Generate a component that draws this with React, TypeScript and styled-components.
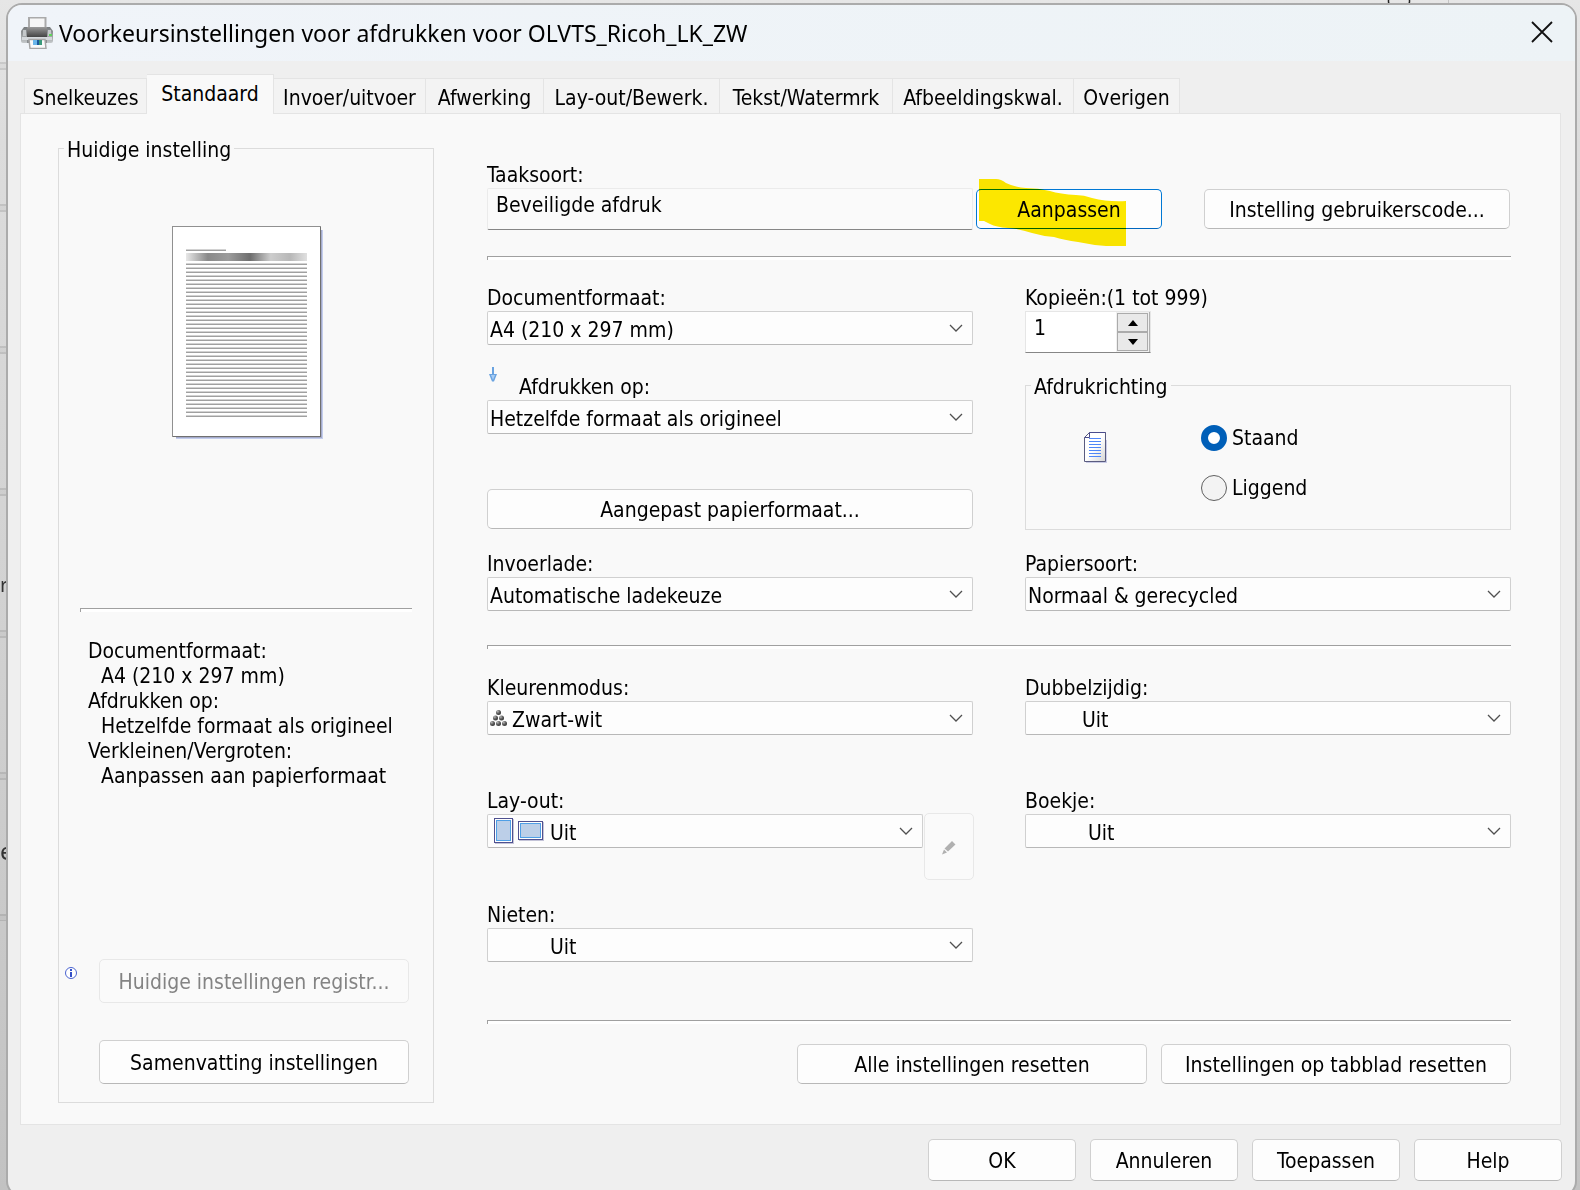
import React, { useState } from "react";
import styled, { createGlobalStyle, css } from "styled-components";

const uiFont = `Tahoma, "DejaVu Sans Condensed", "Noto Sans", sans-serif`;
const titleFont = `"Segoe UI", "Noto Sans", "Open Sans", sans-serif`;

const GlobalStyle = createGlobalStyle`
  *, *::before, *::after { box-sizing: border-box; }
  body { margin: 0; background: #d4d4d4; }
  button, input, select { font: inherit; color: inherit; margin: 0; }
`;

const Desktop = styled.div`
  position: relative;
  display: flex;
  flex-direction: column;
  min-height: 100vh;
  padding: 3px 3px 0 6px;
  overflow: hidden;
  background: linear-gradient(#e6e6e6, #dcdcdc 12%, #d2d2d2 50%, #c2c2c2);
  color: #000;
  font: 21px/26px ${uiFont};
`;

const BehindRows = styled.div`
  position: absolute;
  inset: 62px auto 270px 0;
  width: 8px;
  background: repeating-linear-gradient(
    #0000001c 0 2px, #00000008 2px 6px, #0000001c 6px 8px, transparent 8px 142px
  );
`;

const BehindText = styled.span<{ $top: number; $size: number }>`
  position: absolute;
  top: ${(p) => p.$top}px;
  left: 0;
  font: ${(p) => p.$size}px/26px ${titleFont};
  color: #333;
`;

const BehindBar = styled.svg`
  position: absolute;
  top: 0;
  right: 130px;
`;

const Window = styled.main`
  position: relative;
  flex: 1;
  display: flex;
  flex-direction: column;
  margin-bottom: -6px;
  border: 2px solid #ababab;
  border-radius: 16px;
  overflow: hidden;
  background: #efefef;
`;

const TitleBar = styled.header`
  display: flex;
  align-items: center;
  height: 56px;
  padding: 0 17px 0 13px;
  gap: 6px;
  background: linear-gradient(90deg, #f0f4f9, #edf3f6);
`;

const Title = styled.h1`
  flex: 1;
  margin: 0;
  font: 400 23px/32px ${titleFont};
  white-space: nowrap;
`;

const CloseButton = styled.button`
  display: grid;
  place-items: center;
  width: 32px;
  height: 32px;
  padding: 0 0 2px;
  border: 0;
  background: none;
`;

const Tabs = styled.div`
  display: flex;
  align-items: flex-end;
  height: 52px;
  padding: 0 16px;
`;

const Tab = styled.button<{ $width: number; $active: boolean }>`
  width: ${(p) => p.$width}px;
  height: 35px;
  padding: 3px 0 0;
  border: 1px solid #e4e4e4;
  border-width: 1px 1px 0 0;
  background: #f3f3f3;
  white-space: nowrap;
  line-height: 26px;
  &:first-child { border-left-width: 1px; }
  ${(p) => p.$active && css`
    z-index: 1;
    height: 40px;
    margin-bottom: -1px;
    padding: 0 0 1px;
    background: #f9f9f9;
  `}
`;

const Panel = styled.section`
  flex: 1;
  display: flex;
  gap: 53px;
  margin: 0 14px 0 12px;
  padding: 19px 49px 21px 37px;
  border: 1px solid #e4e4e4;
  background: #f9f9f9;
`;

const Group = styled.fieldset`
  display: flex;
  flex-direction: column;
  min-width: 0;
  margin: 0;
  padding: 0 5px;
  border: 1px solid #dcdcdc;
`;

const Legend = styled.legend`
  padding: 4px 3px 0;
`;

const Overview = styled(Group)`
  flex: 0 0 376px;
`;

const OverviewBody = styled.div`
  flex: 1;
  display: flex;
  flex-direction: column;
  height: 100%;
  padding: 63px 16px 18px;
`;

const Thumbnail = styled.svg`
  align-self: center;
  margin: 0 0 168px 3px;
`;

const Rule = styled.hr`
  width: 100%;
  height: 4px;
  margin: 0;
  border: solid #a0a0a0;
  border-width: 1px 0 0 1px;
  background: #fff;
`;

const Summary = styled.dl`
  margin: 27px 0 auto;
  padding-left: 8px;
  line-height: 25px;
  white-space: nowrap;
`;

const SummaryValue = styled.dd`
  margin: 0 0 0 13px;
`;

const OverviewActions = styled.div`
  display: grid;
  grid-template-columns: 12px 1fr;
  column-gap: 22px;
  row-gap: 37px;
  margin-left: -15px;
  padding-right: 3px;
  & > svg { margin-top: 8px; }
  & > button { grid-column: 2; }
`;

const Button = styled.button<{ $height?: number; $default?: boolean }>`
  display: flex;
  align-items: center;
  justify-content: center;
  height: ${(p) => p.$height ?? 40}px;
  min-width: 0;
  padding: 2px 8px 0;
  border: 1px solid ${(p) => (p.$default ? "#0078d4" : "#d0d0d0")};
  border-bottom-color: ${(p) => (p.$default ? "#0067c0" : "#b8b8b8")};
  border-radius: 5px;
  background: #fdfdfd;
  white-space: nowrap;
  &:disabled {
    border-color: #e8e8e8;
    background: #fafafa;
    color: #838383;
  }
`;

const Settings = styled.div`
  flex: 1;
  min-width: 0;
  padding: 29px 0 19px;
`;

const Columns = styled.div`
  display: grid;
  grid-template-columns: 1fr 1fr;
  column-gap: 52px;
`;

const Stack = styled.div`
  display: flex;
  flex-direction: column;
`;

const Section = styled.div<{ $before: number; $after: number }>`
  padding: ${(p) => p.$before}px 0 ${(p) => p.$after}px;
`;

const Field = styled.div<{ $gap?: number }>`
  display: flex;
  flex-direction: column;
  margin-bottom: ${(p) => p.$gap ?? 0}px;
`;

const Label = styled.label`
  white-space: nowrap;
`;

const LabelRow = styled.div`
  display: flex;
  gap: 22px;
  padding-left: 2px;
  & > svg { margin-top: -7px; }
`;

const JobRow = styled.div`
  display: grid;
  grid-template-columns: 1fr 1fr;
  column-gap: 52px;
  align-items: end;
`;

const JobActions = styled.div`
  display: flex;
  justify-content: space-between;
  margin-left: -49px;
  padding: 0 1px 1px 0;
`;

const JobInput = styled.input`
  width: 100%;
  height: 42px;
  padding: 0 8px 8px;
  border: 1px solid #ebebeb;
  border-bottom-color: #868686;
  border-radius: 2px;
  background: #fafafa;
`;

const Highlighted = styled.div`
  position: relative;
  width: 186px;
  & > button { width: 100%; }
`;

const Marker = styled.svg`
  position: absolute;
  top: -10px;
  left: 3px;
  mix-blend-mode: multiply;
  pointer-events: none;
`;

const CodeButton = styled(Button)`
  width: 306px;
`;

const SelectBox = styled.div`
  position: relative;
  flex: 1;
  display: flex;
`;

const SelectControl = styled.select<{ $indent: number }>`
  appearance: none;
  width: 100%;
  height: 34px;
  padding: 3px 32px 0 ${(p) => p.$indent}px;
  border: 1px solid #d0d0d0;
  border-bottom-color: #b8b8b8;
  border-radius: 2px;
  background: #fdfdfd;
`;

const SelectIcon = styled.span`
  position: absolute;
  inset: 0 auto 0 3px;
  display: flex;
  align-items: center;
  pointer-events: none;
`;

const SheetPair = styled.span`
  display: flex;
  align-items: center;
  gap: 4px;
  padding-left: 4px;
`;

const Chevron = styled.svg`
  position: absolute;
  top: 13px;
  right: 10px;
  pointer-events: none;
`;

const Spinner = styled.div`
  display: flex;
  width: 126px;
  height: 42px;
  border: 1px solid #e6e6e6;
  border-bottom-color: #868686;
  background: #fff;
`;

const SpinnerInput = styled.input`
  appearance: none;
  flex: 1;
  min-width: 0;
  padding: 0 8px 9px;
  border: 0;
  background: none;
  outline: 0;
`;

const SpinnerButtons = styled.div`
  display: flex;
  flex-direction: column;
  width: 34px;
  padding: 1px;
  border-right: 1px solid #b0b0b0;
  background: #f0f0f0;
`;

const SpinButton = styled.button`
  flex: 1;
  display: grid;
  place-items: center;
  padding: 0;
  border: 1px solid #ababab;
  background: #e9e9e9;
`;

const Orientation = styled(Group)`
  height: 160px;
  margin: 17px 0 21px;
`;

const OrientationBody = styled.div`
  display: flex;
  gap: 93px;
  padding: 25px 0 0 53px;
  & > svg { margin-top: 7px; }
`;

const RadioList = styled.div`
  display: flex;
  flex-direction: column;
  gap: 24px;
`;

const RadioLabel = styled.label`
  display: flex;
  align-items: center;
  gap: 5px;
`;

const Radio = styled.input`
  appearance: none;
  width: 26px;
  height: 26px;
  margin: 0;
  border: 1px solid #606060;
  border-radius: 50%;
  background: #f3f3f3;
  &:checked {
    border: 7px solid #005fb8;
    background: #fff;
  }
`;

const LayoutRow = styled.div`
  display: flex;
  gap: 1px;
  height: 34px;
`;

const EditButton = styled(Button)`
  width: 50px;
  margin: -1px -1px 0 0;
`;

const ResetRow = styled.div`
  display: flex;
  justify-content: flex-end;
  gap: 14px;
  padding-top: 20px;
  & > button { width: 350px; }
`;

const Footer = styled.footer`
  display: flex;
  justify-content: flex-end;
  gap: 14px;
  padding: 14px 13px;
  & > button { width: 148px; }
`;

const PrinterIcon = () => (
  <svg width="32" height="32" viewBox="0 0 32 32" aria-hidden="true">
    <defs>
      <linearGradient id="shell" x1="0" x2="0" y1="0" y2="1">
        <stop offset="0" stopColor="#787c7e" />
        <stop offset=".5" stopColor="#9a9ea0" />
        <stop offset="1" stopColor="#c4c8ca" />
      </linearGradient>
      <linearGradient id="slot" x1="0" x2="0" y1="0" y2="1">
        <stop offset="0" stopColor="#9a9a9a" />
        <stop offset="1" stopColor="#444" />
      </linearGradient>
    </defs>
    <path d="M8 .5h16.500V12H8z" fill="#f6f6f6" stroke="#aaa" strokeWidth="2" />
    <path d="M3 10h26l3 4v10q0 2-2 2H2q-2 0-2-2V14z" fill="url(#shell)" />
    <path d="M2 13h3v6H2zM27 13h3v6h-3z" fill="#c4c8ca" />
    <path d="M6 10h20v10H6z" fill="url(#slot)" />
    <path d="M1 20h30v3H1z" fill="#d5d9dc" />
    <rect x="28" y="17" width="3" height="2" fill="#5fd45a" />
    <path d="M6 23h20v3H6z" fill="#8a8e91" />
    <path d="M8 22.500h16l1 9H9z" fill="#fafafa" stroke="#a6a6a6" strokeWidth="1.500" />
    <path d="M12 23h4v5h-4z" fill="#6ab6ea" />
    <path d="M16 23h2v5h-2z" fill="#1c5a9c" />
    <path d="M18 23h3v5h-3z" fill="#3b9a7c" />
  </svg>
);

const ThumbnailDrawing = () => (
  <Thumbnail width="152" height="214" viewBox="0 0 152 214" role="img" aria-label="Voorbeeld" shapeRendering="crispEdges">
    <defs>
      <linearGradient id="band">
        <stop offset="0" stopColor="#e8e8e8" />
        <stop offset=".18" stopColor="#8a8a8a" />
        <stop offset=".35" stopColor="#9c9c9c" />
        <stop offset=".53" stopColor="#6e6e6e" />
        <stop offset=".7" stopColor="#cdcdcd" />
        <stop offset=".86" stopColor="#b8b8b8" />
        <stop offset="1" stopColor="#e0e0e0" />
      </linearGradient>
      <pattern id="lines" width="4" height="4" patternUnits="userSpaceOnUse" y="1">
        <rect width="4" height="1" fill="#d2d2d2" />
        <rect y="1" width="4" height="1" fill="#a0a0a0" />
      </pattern>
    </defs>
    <rect x="4" y="4" width="147" height="209" fill="#c3cdec" />
    <rect x="4" y="4" width="146" height="208" fill="#a5abcb" />
    <rect width="149" height="211" fill="#707070" />
    <rect x="1" y="1" width="147" height="209" fill="#fff" />
    <rect width="149" height="1" fill="#909090" />
    <rect width="1" height="211" fill="#909090" />
    <rect x="14" y="23" width="40" height="1" fill="#d2d2d2" />
    <rect x="14" y="24" width="40" height="1" fill="#a0a0a0" />
    <rect x="14" y="27" width="121" height="8" fill="url(#band)" />
    <rect x="14" y="37" width="121" height="154" fill="url(#lines)" />
  </Thumbnail>
);

const InfoIcon = () => (
  <svg width="12" height="12" viewBox="0 0 12 12" aria-hidden="true">
    <circle cx="6" cy="6" r="5.500" fill="#fff" stroke="#4a63cf" />
    <path d="M5 2h2v2H5zM5 5h2v5H5z" fill="#3450c8" />
  </svg>
);

const ArrowIcon = () => (
  <svg width="8" height="15" viewBox="0 0 8 15" aria-hidden="true">
    <path d="M3 0h2v7h3L5 14.500H3L0 7h3z" fill="#6aa3e0" />
    <path d="M2 8h4l-2 5z" fill="#a9cdf4" />
  </svg>
);

const DocumentIcon = () => (
  <svg width="24" height="31" viewBox="0 0 24 31" aria-hidden="true">
    <defs>
      <linearGradient id="sheet" x1="0" y1="0" x2="1" y2="1">
        <stop offset=".5" stopColor="#fff" />
        <stop offset="1" stopColor="#d4d4d4" />
      </linearGradient>
    </defs>
    <path d="M2 8h21v23H2z" fill="#c9cbe6" />
    <path d="M.5 5.500 5.500.5h16v29H.5z" fill="url(#sheet)" stroke="#5a5c80" />
    <path d="M.5 5.500h5v-5h16" fill="none" stroke="#4a4c8c" />
    <path d="M5 6.500h12M5 9.500h12M5 12.500h12M5 15.500h12M5 18.500h12M5 21.500h12M5 24.500h12" stroke="#4f86f7" />
  </svg>
);

const BallsIcon = () => (
  <svg width="17" height="17" viewBox="0 0 17 17" aria-hidden="true">
    <defs>
      <radialGradient id="ball" cx=".35" cy=".3" r=".8">
        <stop offset="0" stopColor="#b8b8b8" />
        <stop offset=".5" stopColor="#5c5c5c" />
        <stop offset="1" stopColor="#2c2c2c" />
      </radialGradient>
    </defs>
    {[[8.5, 2.5], [5.5, 8], [11.5, 8], [2.5, 13.5], [8.5, 13.5], [14.5, 13.5]].map(([x, y]) => (
      <circle key={`${x}-${y}`} cx={x} cy={y} r="2.500" fill="url(#ball)" />
    ))}
  </svg>
);

const SheetIcon = ({ width, height }: { width: number; height: number }) => (
  <svg width={width + 1} height={height + 1} aria-hidden="true" shapeRendering="crispEdges">
    <rect x="1" y="1" width={width} height={height} fill="#c4c4d8" />
    <rect width={width} height={height} fill="#4f5190" />
    <rect x="1" y="1" width={width - 2} height={height - 2} fill="#fff" />
    <rect x="2" y="2" width={width - 4} height={height - 4} fill="#4f9fe6" />
    <rect x="3" y="3" width={width - 6} height={height - 6} fill="#bccfe8" />
  </svg>
);

const PencilIcon = () => (
  <svg width="14" height="14" viewBox="0 0 14 14" aria-hidden="true">
    <path d="M10 0 13.500 3.500 6 10.500 2.500 7.500zM2 8.500 5 11.500 0 13.500z" fill="#b0b0b0" />
  </svg>
);

interface SelectProps {
  id: string;
  value: string;
  indent?: number;
  icon?: React.ReactNode;
}

const Select = ({ id, value, indent = 2, icon }: SelectProps) => (
  <SelectBox>
    <SelectControl id={id} $indent={indent} defaultValue={value}>
      <option>{value}</option>
    </SelectControl>
    {icon && <SelectIcon>{icon}</SelectIcon>}
    <Chevron width="14" height="9" viewBox="0 0 14 9" aria-hidden="true">
      <path d="m1 1 6 6 6-6" fill="none" stroke="#505050" strokeWidth="1.300" />
    </Chevron>
  </SelectBox>
);

const SelectField = ({ label, gap, ...select }: SelectProps & { label: string; gap?: number }) => (
  <Field $gap={gap}>
    <Label htmlFor={select.id}>{label}</Label>
    <Select {...select} />
  </Field>
);

const tabs = [
  { name: "Snelkeuzes", width: 123 },
  { name: "Standaard", width: 127 },
  { name: "Invoer/uitvoer", width: 152 },
  { name: "Afwerking", width: 118 },
  { name: "Lay-out/Bewerk.", width: 176 },
  { name: "Tekst/Watermrk", width: 173 },
  { name: "Afbeeldingskwal.", width: 181 },
  { name: "Overigen", width: 106 },
];

const summary = [
  ["Documentformaat:", "A4 (210 x 297 mm)"],
  ["Afdrukken op:", "Hetzelfde formaat als origineel"],
  ["Verkleinen/Vergroten:", "Aanpassen aan papierformaat"],
];

export default function App() {
  const [activeTab, setActiveTab] = useState("Standaard");
  const [copies, setCopies] = useState(1);

  return (
    <>
      <GlobalStyle />
      <Desktop>
        <BehindRows />
        <BehindText $top={572} $size={20}>r</BehindText>
        <BehindText $top={838} $size={24}>e</BehindText>
        <BehindBar width="64" height="5" aria-hidden="true">
          <path d="M2.500 0v2q0 2 2 3M23.500 0v2q0 2-2 3" fill="none" stroke="#222" strokeWidth="1.500" />
          <path d="M62.500 0v5" stroke="#c4c4c4" />
        </BehindBar>
        <Window>
          <TitleBar>
            <PrinterIcon />
            <Title>Voorkeursinstellingen voor afdrukken voor OLVTS_Ricoh_LK_ZW</Title>
            <CloseButton type="button" aria-label="Sluiten">
              <svg width="22" height="22" viewBox="0 0 22 22" aria-hidden="true">
                <path d="m1 1 20 20M21 1 1 21" stroke="#111" strokeWidth="1.800" />
              </svg>
            </CloseButton>
          </TitleBar>
          <Tabs role="tablist">
            {tabs.map((tab) => (
              <Tab
                key={tab.name}
                type="button"
                role="tab"
                aria-selected={tab.name === activeTab}
                $width={tab.width}
                $active={tab.name === activeTab}
                onClick={() => setActiveTab(tab.name)}
              >
                {tab.name}
              </Tab>
            ))}
          </Tabs>
          <Panel>
            <Overview>
              <Legend>Huidige instelling</Legend>
              <OverviewBody>
                <ThumbnailDrawing />
                <Rule />
                <Summary>
                  {summary.map(([term, value]) => (
                    <React.Fragment key={term}>
                      <dt>{term}</dt>
                      <SummaryValue>{value}</SummaryValue>
                    </React.Fragment>
                  ))}
                </Summary>
                <OverviewActions>
                  <InfoIcon />
                  <Button type="button" $height={44} disabled>Huidige instellingen registr...</Button>
                  <Button type="button" $height={44}>Samenvatting instellingen</Button>
                </OverviewActions>
              </OverviewBody>
            </Overview>
            <Settings>
              <JobRow>
                <Field>
                  <Label htmlFor="job">Taaksoort:</Label>
                  <JobInput id="job" readOnly value="Beveiligde afdruk" />
                </Field>
                <JobActions>
                  <Highlighted>
                    <Button type="button" $default>Aanpassen</Button>
                    <Marker width="148" height="68" viewBox="0 0 148 68" aria-hidden="true">
                      <path
                        d="M0 0h17q5 0 10 4 8 4 20 5 12 0 24 3 10 3 26 4 8 0 16 3 16 4 34 3v45h-20q-14-1-28-4-14-2-24-5-12-1-22-4-12-4-24-5-12-1-18-4l-6-3H0z"
                        fill="#fee900"
                      />
                    </Marker>
                  </Highlighted>
                  <CodeButton type="button">Instelling gebruikerscode...</CodeButton>
                </JobActions>
              </JobRow>
              <Section $before={26} $after={25}><Rule /></Section>
              <Columns>
                <Stack>
                  <SelectField id="size" label="Documentformaat:" value="A4 (210 x 297 mm)" gap={29} />
                  <Field $gap={55}>
                    <LabelRow>
                      <ArrowIcon />
                      <Label htmlFor="print-on">Afdrukken op:</Label>
                    </LabelRow>
                    <Select id="print-on" value="Hetzelfde formaat als origineel" />
                  </Field>
                  <Button type="button">Aangepast papierformaat...</Button>
                </Stack>
                <Stack>
                  <Field>
                    <Label htmlFor="copies">Kopieën:(1 tot 999)</Label>
                    <Spinner>
                      <SpinnerInput
                        id="copies"
                        inputMode="numeric"
                        value={copies}
                        onChange={(e) => setCopies(Number(e.target.value) || 1)}
                      />
                      <SpinnerButtons>
                        <SpinButton type="button" aria-label="Meer" onClick={() => setCopies(Math.min(999, copies + 1))}>
                          <svg width="10" height="6"><path d="M0 6 5 0l5 6z" /></svg>
                        </SpinButton>
                        <SpinButton type="button" aria-label="Minder" onClick={() => setCopies(Math.max(1, copies - 1))}>
                          <svg width="10" height="6"><path d="M0 0h10L5 6z" /></svg>
                        </SpinButton>
                      </SpinnerButtons>
                    </Spinner>
                  </Field>
                  <Orientation>
                    <Legend>Afdrukrichting</Legend>
                    <OrientationBody>
                      <DocumentIcon />
                      <RadioList>
                        <RadioLabel><Radio type="radio" name="orientation" defaultChecked />Staand</RadioLabel>
                        <RadioLabel><Radio type="radio" name="orientation" />Liggend</RadioLabel>
                      </RadioList>
                    </OrientationBody>
                  </Orientation>
                </Stack>
                <SelectField id="tray" label="Invoerlade:" value="Automatische ladekeuze" />
                <SelectField id="paper" label="Papiersoort:" value="Normaal & gerecycled" />
              </Columns>
              <Section $before={34} $after={26}><Rule /></Section>
              <Columns>
                <SelectField id="color" label="Kleurenmodus:" value="Zwart-wit" indent={24} icon={<BallsIcon />} gap={53} />
                <SelectField id="duplex" label="Dubbelzijdig:" value="Uit" indent={56} />
                <Field $gap={54}>
                  <Label htmlFor="layout">Lay-out:</Label>
                  <LayoutRow>
                    <Select
                      id="layout"
                      value="Uit"
                      indent={62}
                      icon={<SheetPair><SheetIcon width={19} height={25} /><SheetIcon width={25} height={19} /></SheetPair>}
                    />
                    <EditButton type="button" $height={67} disabled aria-label="Lay-out bewerken"><PencilIcon /></EditButton>
                  </LayoutRow>
                </Field>
                <SelectField id="booklet" label="Boekje:" value="Uit" indent={62} />
                <SelectField id="staple" label="Nieten:" value="Uit" indent={62} />
              </Columns>
              <Section $before={58} $after={0}><Rule /></Section>
              <ResetRow>
                <Button type="button">Alle instellingen resetten</Button>
                <Button type="button">Instellingen op tabblad resetten</Button>
              </ResetRow>
            </Settings>
          </Panel>
          <Footer>
            <Button type="button" $height={42}>OK</Button>
            <Button type="button" $height={42}>Annuleren</Button>
            <Button type="button" $height={42}>Toepassen</Button>
            <Button type="button" $height={42}>Help</Button>
          </Footer>
        </Window>
      </Desktop>
    </>
  );
}
